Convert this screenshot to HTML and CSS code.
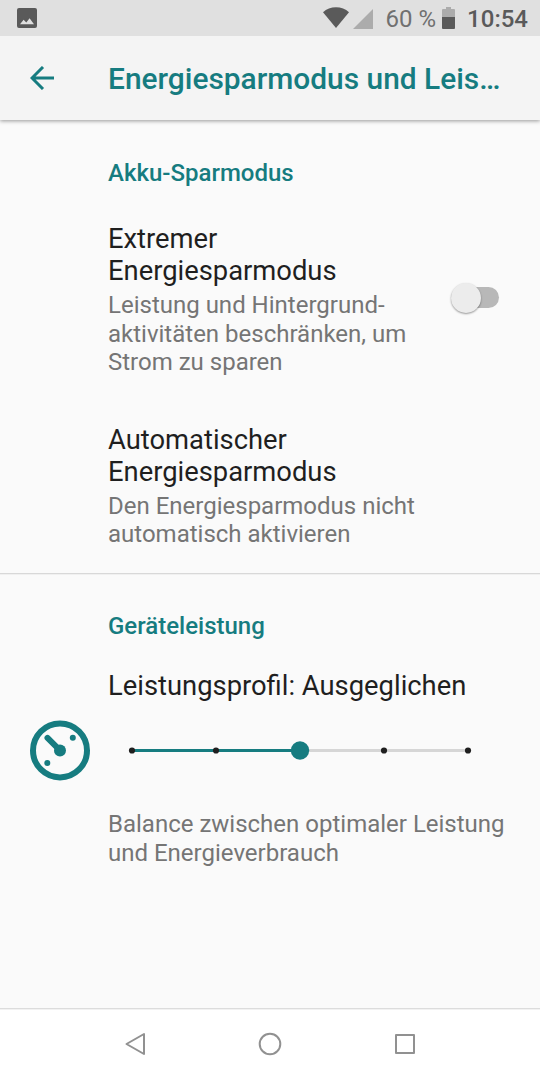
FILE: index.html
```html
<!DOCTYPE html>
<html lang="de">
<head>
    <meta charset="UTF-8">
    <title>Energiesparmodus und Leistung</title>
    <link rel="stylesheet" href="styles.css">
</head>
<body>
    <div class="screen">
        <div class="status-bar">
            <svg class="status-picture" width="20" height="20" viewBox="0 0 20 20">
                <path fill="#5a5a5a" fill-rule="evenodd" d="M2 0H18a2 2 0 0 1 2 2V18a2 2 0 0 1-2 2H2a2 2 0 0 1-2-2V2a2 2 0 0 1 2-2ZM3 16.300H17L12.600 10.200 9.300 14.500 6.600 11.800Z"/>
            </svg>
            <svg class="status-wifi" width="26" height="21" viewBox="0 0 26 21">
                <path fill="#5a5a5a" d="M0 5.300C3.500 1.900 8 .2 13 .2s9.500 1.700 13 5.100L13 21Z"/>
            </svg>
            <svg class="status-signal" width="20" height="20" viewBox="0 0 20 20">
                <path fill="#acacac" d="M0 20L20 0V20Z"/>
            </svg>
            <span class="status-percent">60 %</span>
            <svg class="status-battery" width="13" height="22" viewBox="0 0 13 22">
                <path fill="#acacac" d="M4 0H9V2H12a1 1 0 0 1 1 1V10H0V3a1 1 0 0 1 1-1H4Z"/>
                <path fill="#5a5a5a" d="M0 10H13V21a1 1 0 0 1-1 1H1a1 1 0 0 1-1-1Z"/>
            </svg>
            <span class="status-clock">10:54</span>
        </div>

        <div class="toolbar">
            <svg class="back" width="24" height="24" viewBox="0 0 24 24">
                <path fill="none" stroke="#167c80" stroke-width="3" d="M24 12H2M13 1L2 12 13 23"/>
            </svg>
            <div class="toolbar-title">Energiesparmodus und Leis…</div>
        </div>

        <div class="content">
            <div class="section">
                <div class="category">Akku-Sparmodus</div>
                <div class="preference preference-switch">
                    <div class="text">
                        <div class="title">Extremer<br>Energiesparmodus</div>
                        <div class="summary">Leistung und Hintergrund-<br>aktivitäten beschränken, um<br>Strom zu sparen</div>
                    </div>
                    <div class="switch"><div class="switch-thumb"></div></div>
                </div>
                <div class="preference">
                    <div class="title">Automatischer<br>Energiesparmodus</div>
                    <div class="summary">Den Energiesparmodus nicht<br>automatisch aktivieren</div>
                </div>
            </div>

            <div class="section section-performance">
                <div class="category">Geräteleistung</div>
                <div class="title profile">Leistungsprofil: Ausgeglichen</div>
                <div class="slider-row">
                    <svg class="gauge" width="60" height="61" viewBox="0 0 60 61">
                        <circle cx="30" cy="30.400" r="27" fill="none" stroke="#167c80" stroke-width="6"/>
                        <path stroke="#167c80" stroke-width="6" stroke-linecap="round" d="M17.500 17.900L30 30.400"/>
                        <circle cx="30" cy="30.400" r="6" fill="#167c80"/>
                        <circle cx="42.800" cy="17.700" r="3" fill="#167c80"/>
                        <circle cx="17.300" cy="43.100" r="3" fill="#167c80"/>
                    </svg>
                    <svg class="slider" width="344" height="21" viewBox="0 0 344 21">
                        <path stroke="#d6d6d6" stroke-width="3" d="M172 10.500H340"/>
                        <path stroke="#167c80" stroke-width="3" d="M4 10.500H172"/>
                        <g fill="#1f1f1f">
                            <circle cx="4" cy="10.500" r="3.100"/>
                            <circle cx="88" cy="10.500" r="3.100"/>
                            <circle cx="256" cy="10.500" r="3.100"/>
                            <circle cx="340" cy="10.500" r="3.100"/>
                        </g>
                        <circle cx="172" cy="10.500" r="9.200" fill="#167c80"/>
                    </svg>
                </div>
                <div class="summary">Balance zwischen optimaler Leistung<br>und Energieverbrauch</div>
            </div>
        </div>

        <div class="nav-bar">
            <svg width="24" height="24" viewBox="0 0 24 24">
                <path fill="none" stroke="#919191" stroke-width="2" stroke-linejoin="round" d="M21 2V22L3.500 12Z"/>
            </svg>
            <svg width="24" height="24" viewBox="0 0 24 24">
                <circle cx="12" cy="12" r="10.300" fill="none" stroke="#919191" stroke-width="2"/>
            </svg>
            <svg width="24" height="24" viewBox="0 0 24 24">
                <rect x="3" y="3" width="18" height="18" fill="none" stroke="#919191" stroke-width="2" stroke-linejoin="round"/>
            </svg>
        </div>
    </div>
</body>
</html>
```
FILE: styles.css
```css
body {
    margin: 0;
    font-family: Roboto, "Noto Sans", sans-serif;
    background: #fafafa;
}

.screen {
    display: flex;
    flex-direction: column;
    width: 540px;
    height: 1080px;
    overflow: hidden;
}

.status-bar {
    display: flex;
    flex: none;
    align-items: flex-start;
    height: 36px;
    padding: 0 12px 0 17px;
    box-sizing: border-box;
    background: #e0e0e0;
    font-size: 24px;
    line-height: 38px;
    white-space: nowrap;
    z-index: 2;
}

.status-picture {
    margin-top: 8px;
}

.status-wifi {
    margin: 7px 4px 0 auto;
}

.status-signal {
    margin: 9px 13px 0 0;
}

.status-percent {
    color: #707070;
}

.status-battery {
    margin: 7px 12px 0 6px;
}

.status-clock {
    font-weight: 500;
    color: #5a5a5a;
}

.toolbar {
    display: flex;
    flex: none;
    align-items: center;
    height: 84px;
    padding: 0 30px;
    box-sizing: border-box;
    background: #f4f4f4;
    box-shadow: 0 1px 4px rgba(0, 0, 0, 0.4);
    z-index: 1;
}

.toolbar-title {
    margin-left: 54px;
    padding-top: 1px;
    color: #167c80;
    font-size: 29.9px;
    font-weight: 500;
    line-height: 34px;
    white-space: nowrap;
}

.content {
    flex: 1;
    white-space: nowrap;
}

.section {
    height: 453px;
    padding: 39px 41px 0 108px;
    box-sizing: border-box;
}

.category {
    height: 28px;
    color: #167c80;
    font-size: 24px;
    font-weight: 500;
    line-height: 28px;
}

.preference {
    margin-top: 36px;
}

.preference + .preference {
    margin-top: 47px;
}

.preference-switch {
    display: flex;
    align-items: center;
    justify-content: space-between;
}

.title {
    color: #1f1f1f;
    font-size: 27.36px;
    line-height: 32px;
}

.summary {
    margin-top: 4px;
    color: #757575;
    font-size: 24px;
    line-height: 28.5px;
}

.switch {
    width: 48px;
    height: 21px;
    margin-bottom: 4px;
    border-radius: 11px;
    background: #b8b8b8;
}

.switch-thumb {
    width: 30px;
    height: 30px;
    margin-top: -4px;
    border-radius: 50%;
    background: #ececec;
    box-shadow: 0 1px 2px rgba(0, 0, 0, 0.4);
}

.section-performance {
    height: auto;
    border-top: 1px solid #d8d8d8;
    padding: 38px 0 0 108px;
    box-shadow: inset 0 1px #f0f0f0;
}

.profile {
    margin-top: 30px;
}

.slider-row {
    display: flex;
    align-items: center;
    margin: 18px 0 29px -78px;
}

.slider {
    margin-left: 38px;
}

.nav-bar {
    display: flex;
    flex: none;
    align-items: center;
    justify-content: center;
    gap: 111px;
    height: 72px;
    padding-bottom: 1px;
    box-sizing: border-box;
    border-top: 1px solid #dcdcdc;
    background: #ffffff;
    box-shadow: inset 0 1px #f2f2f2;
}
```
